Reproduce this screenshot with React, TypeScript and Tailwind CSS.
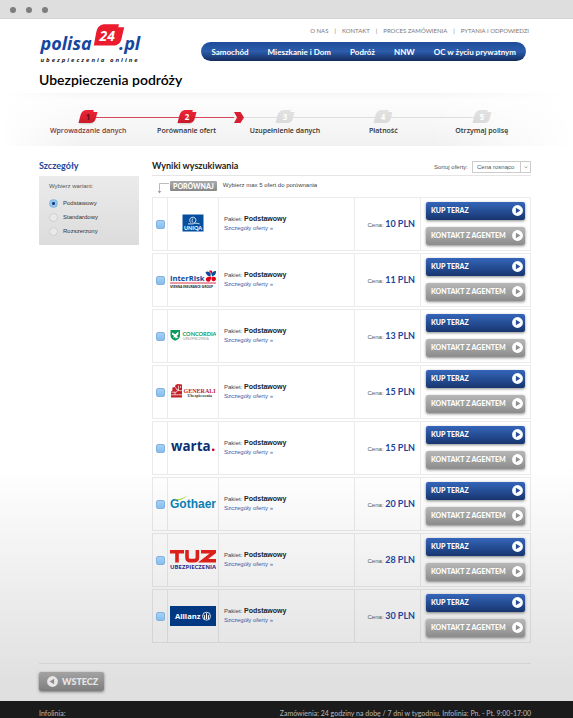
import { useState, type ReactNode } from 'react';
import { clsx } from 'clsx';

interface Offer {
  id: string;
  name: string;
  price: number;
  logo: ReactNode;
}

const TOP_LINKS = ['O NAS', 'KONTAKT', 'PROCES ZAMÓWIENIA', 'PYTANIA I ODPOWIEDZI'];
const NAV_LINKS = ['Samochód', 'Mieszkanie i Dom', 'Podróż', 'NNW', 'OC w życiu prywatnym'];
const STEPS = ['Wprowadzanie danych', 'Porównanie ofert', 'Uzupełnienie danych', 'Płatność', 'Otrzymaj polisę'];
const VARIANTS = ['Podstawowy', 'Standardowy', 'Rozszerzony'];
const CURRENT_STEP = 2;

function UniqaLogo() {
  return (
    <svg width="46" height="20" viewBox="0 0 46 20" aria-hidden="true">
      <rect x="12.5" y="0.5" width="21" height="17" fill="#064f9e" />
      <g fill="none" stroke="#fff" strokeWidth="0.8">
        <path d="M20.9 8.700c-1.800-1.600-1.600-4.600 1-5.400 2.400-.6 4.400 1.200 4 3.400-.2 1.200-1 2-2 2.400" />
        <path d="M23.1 8.700c-1.200-1-1.400-2.600-.2-4.200" />
        <path d="M18 9.900h4c2.400 0 2.400-.8 4-.8s2 .8 3.600.8" />
      </g>
      <text x="23" y="15.8" textAnchor="middle" fill="#fff" fontSize="5.5" fontWeight="700" fontFamily="Lato, sans-serif">UNIQA</text>
    </svg>
  );
}

function InterRiskLogo() {
  return (
    <svg width="46" height="20" viewBox="0 0 46 20" aria-hidden="true">
      <text x="0" y="11" fill="#0d4a9b" fontSize="7.6" fontWeight="700" fontFamily="Open Sans, sans-serif">InterRisk</text>
      <path d="M35.500 2c2-1 4-.6 5.400 2L40.400 6.200c-2.200.2-4.200-1.200-4.900-4.200z" fill="#0d4a9b" />
      <path d="M46 1c.2 2.400-.6 4.600-3.600 5.200L41.400 5c0-2.600 2-4 4.600-4z" fill="#0d4a9b" />
      <path d="M35.800 9.800c-.2-2 1.400-3.400 4.800-3.400l.6.8c-.2 2.200-.8 3.800-2 4.400-1.600.4-3-.4-3.400-1.800z" fill="#e2001a" />
      <path d="M41.800 7c2.200-.8 4.200-.2 4.200 1.800 0 2-1.800 2.800-3.400 2.200-1.200-.6-1.400-2.200-.8-4z" fill="#e2001a" />
      <path d="M39 1c1-.8 3.200-.6 3.200.8 0 1-.6 2-1 2.600-.4-1.200-1-2.400-2.200-3.400z" fill="#e2001a" />
      <rect x="0" y="12.500" width="46" height="1" fill="#e2304a" />
      <text x="0" y="18" fill="#222" fontSize="4" fontWeight="700" fontFamily="Open Sans, sans-serif">
        V<tspan fontSize="3">IENNA </tspan>I<tspan fontSize="3">NSURANCE </tspan>G<tspan fontSize="3">ROUP</tspan>
      </text>
    </svg>
  );
}

function ConcordiaLogo() {
  return (
    <svg width="46" height="20" viewBox="0 0 46 20" aria-hidden="true">
      <path d="M.5 4h9.500v5.500c0 2.600-2 4.200-4.800 5.200C2.400 13.700.5 12.100.5 9.500z" fill="#0a9a5c" />
      <path d="M2 6.500l3.200 1.800L8.400 5.500v3L6.600 10.100 8.400 11.500 5.600 12.500 5 10.900 3.200 11.900 4 9.700 2 8.500z" fill="#fff" />
      <text x="12.5" y="9.5" fill="#0a9a5c" fontSize="5.6" fontWeight="700" fontFamily="Lato, sans-serif">CONCORDIA</text>
      <text x="13" y="13.5" fill="#9a9a9a" fontSize="3.4" fontFamily="Lato, sans-serif">UBEZPIECZENIA</text>
    </svg>
  );
}

function GeneraliLogo() {
  return (
    <svg width="46" height="20" viewBox="0 0 46 20" aria-hidden="true">
      <path d="M1 15.500v-6l1.400-1V5.600L5 5l.6-2.200L8 2l4 .6v12.900z" fill="#c3202a" />
      <g stroke="#fff" strokeWidth="0.7" fill="none">
        <path d="M5.400 5.200 7 8l2-.4M8.400 3.600v5M1.400 10.200h5l1-1.600h4.400M1 12.800h11M5 10.200v2.600M10.400 4v2" />
      </g>
      <text x="13.6" y="10.500" fill="#c3202a" fontSize="6" fontWeight="700" fontFamily="Liberation Serif, serif">GENERALI</text>
      <text x="17.5" y="15.2" fill="#333" fontSize="4" fontWeight="700" fontFamily="Liberation Serif, serif">Ubezpieczenia</text>
    </svg>
  );
}

function WartaLogo() {
  return (
    <svg width="46" height="20" viewBox="0 0 46 20" aria-hidden="true">
      <text x="1" y="13" fill="#0a2f74" fontSize="13.4" fontWeight="700" fontFamily="Open Sans, sans-serif">warta</text>
      <circle cx="43.2" cy="11.8" r="1.400" fill="#d5004b" />
    </svg>
  );
}

function GothaerLogo() {
  return (
    <svg width="46" height="20" viewBox="0 0 46 20" aria-hidden="true">
      <text x="0" y="14" fill="#0a7fb4" fontSize="12" fontWeight="700" fontFamily="Liberation Sans, sans-serif">Gothaer</text>
      <path d="M4 4.400c4 1.800 8 .2 13.500-3.200C14.400 4.400 8.600 8.400 4 4.400z" fill="#a5d42a" />
    </svg>
  );
}

function TuzLogo() {
  return (
    <svg width="46" height="20" viewBox="0 0 46 20" aria-hidden="true">
      <g fill="none" stroke="#dd1f1c" strokeWidth="3.6">
        <path d="M0 1.800h14M7 1v11.500" />
        <path d="M17 0v7.400c0 2.200 1 3.200 3.400 3.200h3.600c2.400 0 3.400-1 3.400-3.200V0" />
        <path d="M31 1.800h13.600l-11.400 8.900H46" />
      </g>
      <text x="0" y="19" fill="#2b2f8f" fontSize="6" fontWeight="700" fontFamily="Open Sans, sans-serif">UBEZPIECZENIA</text>
    </svg>
  );
}

function AllianzLogo() {
  return (
    <svg width="46" height="20" viewBox="0 0 46 20" aria-hidden="true">
      <rect width="46" height="20" fill="#003882" />
      <text x="5" y="12.8" fill="#fff" fontSize="7.6" fontWeight="700" fontFamily="Open Sans, sans-serif">Allianz</text>
      <g fill="none" stroke="#fff">
        <circle cx="36.5" cy="10.2" r="4" strokeWidth="0.8" />
        <path d="M36.500 7.200v6M34.600 13V9.400h-.8M38.400 13V9.400h.8" strokeWidth="1" />
      </g>
    </svg>
  );
}

const OFFERS: Offer[] = [
  { id: 'uniqa', name: 'UNIQA', price: 10, logo: <UniqaLogo /> },
  { id: 'interrisk', name: 'InterRisk', price: 11, logo: <InterRiskLogo /> },
  { id: 'concordia', name: 'Concordia', price: 13, logo: <ConcordiaLogo /> },
  { id: 'generali', name: 'Generali', price: 15, logo: <GeneraliLogo /> },
  { id: 'warta', name: 'Warta', price: 15, logo: <WartaLogo /> },
  { id: 'gothaer', name: 'Gothaer', price: 20, logo: <GothaerLogo /> },
  { id: 'tuz', name: 'TUZ', price: 28, logo: <TuzLogo /> },
  { id: 'allianz', name: 'Allianz', price: 30, logo: <AllianzLogo /> },
];

function BrandLogo() {
  return (
    <svg width="104" height="42" viewBox="0 0 104 42" role="img" aria-label="polisa24.pl">
      <g fontFamily="Open Sans, sans-serif" fontStyle="italic" fontWeight="700">
        <text x="1.5" y="26.5" fontSize="18" fill="#15479e">polisa</text>
        <text x="80" y="26.5" fontSize="18" fill="#15479e">.pl</text>
        <path d="M54.800 22.600 57.200 9.600c1.200-6 4-8.400 9.300-8.400h13.400l-.6 3h5.900l-2.500 10.800c-1.200 5.200-3.700 7.600-8.900 7.600z" fill="#ea1c2d" />
        <text x="60.5" y="17.5" fontSize="14" fill="#fff">24</text>
      </g>
      <text x="1.5" y="38.5" fontSize="6" fontStyle="italic" fontWeight="700" fill="#222" fontFamily="Open Sans, sans-serif" className="tracking-[2px]">
        ubezpieczenia online
      </text>
    </svg>
  );
}

function StepBadge({ n }: { n: number }) {
  const active = n <= CURRENT_STEP;
  return (
    <svg width="20" height="16" viewBox="0 0 20 16" className="relative" aria-hidden="true">
      <defs>
        <linearGradient id={`step${n}`} x1="0" y1="0" x2="0" y2="1">
          <stop offset="0" stopColor={active ? '#ee2436' : '#e2e2e2'} />
          <stop offset="1" stopColor={active ? '#c81a2a' : '#dadada'} />
        </linearGradient>
      </defs>
      {active && <ellipse cx="8" cy="14.5" rx="7" ry="1" fill="#000" opacity="0.12" />}
      <path d="M.5 14 2.400 6.600C3.600 2.400 5.600 1 9.400 1h6.400l-.4 2h4.100l-1.600 6c-1 3.800-2.800 5-6.200 5z" fill={`url(#step${n})`} />
      <text x="10" y="11" textAnchor="middle" fontSize="8" fontWeight="700" fontFamily="Open Sans, sans-serif" fill={n === 1 ? '#5a1018' : '#fff'}>
        {n}
      </text>
    </svg>
  );
}

function PlayCircle({ fill, flip }: { fill: string; flip?: boolean }) {
  return (
    <svg width="11" height="11" viewBox="0 0 11 11" className={clsx('shrink-0', flip && 'rotate-180')} aria-hidden="true">
      <circle cx="5.5" cy="5.5" r="5.4" fill={flip ? '#e6e6e6' : '#fff'} />
      <path d="M3.900 2.700v5.600L8.400 5.500z" fill={fill} />
    </svg>
  );
}

function Stepper() {
  return (
    <section className="relative mt-1 h-[53px] bg-linear-to-b from-white to-[#f1f1f1]">
      {/* top edge shade */}
      <div className="h-2 bg-linear-to-b from-[#f5f5f5] to-transparent" />
      {/* fade on both sides */}
      <div className="absolute inset-0 bg-linear-to-r from-white via-transparent via-15% to-transparent" />
      <div className="absolute inset-0 bg-linear-to-l from-white via-transparent via-25% to-transparent" />
      <ol className="relative mr-[42px] ml-[39px] grid grid-cols-5 pt-2">
        {STEPS.map((label, i) => (
          <li key={label} className="relative flex flex-col items-center">
            {i < STEPS.length - 1 && (
              <span className={clsx('absolute top-2 left-1/2 h-px w-full', i === 0 ? 'bg-[#d9485a]' : 'bg-[#dedede]')} />
            )}
            {i === CURRENT_STEP - 1 && (
              <span className="absolute top-[3px] left-1/2 flex h-[11px] w-[57px] items-center">
                <span className="h-px grow bg-[#d9485a]" />
                <svg width="10" height="11" viewBox="0 0 10 11" aria-hidden="true">
                  <path d="M0 0h6.500L10 5.500 6.500 11H0l3-5.500z" fill="#d81f31" />
                </svg>
              </span>
            )}
            <StepBadge n={i + 1} />
            <span
              className={clsx(
                "mt-px font-['Open_Sans',sans-serif] text-[7px] leading-[10px] font-semibold whitespace-nowrap",
                i === 0 ? 'text-[#7d3a42]' : 'text-[#333]',
              )}
            >
              {label}
            </span>
          </li>
        ))}
      </ol>
    </section>
  );
}

function OfferRow({ offer }: { offer: Offer }) {
  const cell = 'h-[54px] border-y border-l border-black/8';
  return (
    <tr>
      <td className={clsx(cell, 'w-[15px] p-0')}>
        <input
          type="checkbox"
          aria-label={`Porównaj ${offer.name}`}
          className="mx-auto block size-[9px] appearance-none rounded-[2px] border border-[#83b3dc] bg-linear-to-b from-[#a3d0f5] to-[#86bfee] checked:bg-[#2f6fb5]"
        />
      </td>
      <td className={clsx(cell, 'w-[51px] py-0 pr-0 pl-0.5')}>{offer.logo}</td>
      <td className={clsx(cell, 'py-0 pr-0 pl-[5px]')}>
        <div className="text-[6px] leading-[9px] text-[#444]">
          Pakiet: <strong className="text-[7px] text-[#222]">Podstawowy</strong>
        </div>
        <a href="#" className="block pb-0.5 text-[6px] leading-[9px] text-[#4059a8]">Szczegóły oferty »</a>
      </td>
      <td className={clsx(cell, 'w-[66px] py-0 pr-[5px] pl-0 text-right text-[6px] text-[#555]')}>
        Cena: <span className="font-['Lato',sans-serif] text-[9px] font-bold text-[#1d459b]">{offer.price} PLN</span>
      </td>
      <td className={clsx(cell, 'w-[111px] border-r px-[5px] pt-0 pb-0.5')}>
        <div className="flex flex-col gap-[7px] font-['Lato',sans-serif] text-[7px] font-black text-white">
          <button className="flex h-[18px] items-center justify-between rounded-[2px] bg-linear-to-b from-[#3566bb] to-[#17366f] pr-0.5 pl-[5px] shadow-[0_1px_3px_#0007]">
            KUP TERAZ
            <PlayCircle fill="#24509a" />
          </button>
          <button className="flex h-[18px] items-center justify-between rounded-[2px] bg-linear-to-b from-[#b7b7b7] to-[#8c8c8c] pr-0.5 pl-[5px] whitespace-nowrap shadow-[0_1px_3px_#0007]">
            KONTAKT Z AGENTEM
            <PlayCircle fill="#8f8f8f" />
          </button>
        </div>
      </td>
    </tr>
  );
}

export default function App() {
  const [variant, setVariant] = useState(VARIANTS[0]);
  const [sort, setSort] = useState('asc');

  const offers = sort === 'asc' ? OFFERS : [...OFFERS].reverse();

  return (
    <div className="flex min-h-screen flex-col bg-linear-to-b from-white from-65% to-[#e0e0e0] to-95% font-['Liberation_Sans',sans-serif]">
      {/* Window bar */}
      <div className="flex h-[19px] shrink-0 items-center gap-2.5 border-b border-[#d2d2d2] bg-[#dedede] pt-0.5 pl-[10px]">
        {[0, 1, 2].map(i => (
          <span key={i} className="size-1.5 rounded-full bg-[#7d7d7d]" />
        ))}
      </div>

      <header className="mr-[42px] ml-[39px] font-['Lato',sans-serif]">
        <div className="flex items-start justify-between pt-1">
          <a href="#"><BrandLogo /></a>
          <div className="flex flex-col items-end pt-1">
            <ul className="flex pr-0.5 text-[6px] leading-2 text-[#777]">
              {TOP_LINKS.map((link, i) => (
                <li key={link} className="flex">
                  {i > 0 && <span className="px-1.5">|</span>}
                  <a href="#">{link}</a>
                </li>
              ))}
            </ul>
            <nav className="mt-[7px] mr-[5px] flex h-[19px] items-center gap-[19px] rounded-full bg-linear-to-b from-[#1f4d9c] via-[#2c5cab] via-50% to-[#132c5e] px-2.5 text-[8px] font-bold text-white">
              {NAV_LINKS.map(link => (
                <a key={link} href="#">{link}</a>
              ))}
            </nav>
          </div>
        </div>
        <h1 className="mt-1.5 text-[14px] leading-[18px] font-semibold text-black">Ubezpieczenia podróży</h1>
      </header>

      <Stepper />

      <main className="mt-3 mr-[42px] ml-[39px] flex gap-[13px]">
        <aside className="w-[100px] shrink-0">
          <h2 className="font-['Lato',sans-serif] text-[9px] leading-4 font-bold text-[#1d459b]">Szczegóły</h2>
          <fieldset className="mt-0.5 h-[69px] rounded-[1px] bg-linear-to-b from-[#ebebeb] to-[#dcdcdc] px-2.5 pt-1.5 text-[6px] text-[#333]">
            <legend className="float-left mb-1.5 w-full leading-2 text-[#555]">Wybierz wariant:</legend>
            {VARIANTS.map(v => (
              <label key={v} className="clear-both flex h-[14px] items-center gap-[5px]">
                <input
                  type="radio"
                  name="variant"
                  checked={variant === v}
                  onChange={() => setVariant(v)}
                  className="size-[9px] appearance-none rounded-full border border-[#cfcfcf] bg-[#e9e9e9] checked:border-[#86b4dd] checked:bg-[radial-gradient(circle,#123f73_0_1px,#93c6f0_2px)]"
                />
                {v}
              </label>
            ))}
          </fieldset>
        </aside>

        <section className="grow">
          <div className="flex h-[18px] items-start justify-between border-b border-black/10">
            <h2 className="font-['Lato',sans-serif] text-[9px] leading-4 font-bold text-[#222]">Wyniki wyszukiwania</h2>
            <div className="flex items-center gap-1 pt-[3px] text-[6px] text-[#555]">
              <label htmlFor="sort">Sortuj oferty:</label>
              <div className="relative">
                <select
                  id="sort"
                  value={sort}
                  onChange={e => setSort(e.target.value)}
                  className="block h-3 w-[59px] appearance-none border border-[#ccc] bg-white pl-1 text-[6px] leading-[10px]"
                >
                  <option value="asc">Cena rosnąco</option>
                  <option value="desc">Cena malejąco</option>
                </select>
                <span className="pointer-events-none absolute inset-y-0 right-0 flex w-[11px] items-center justify-center border-l border-[#ccc]">
                  <svg width="4" height="3" viewBox="0 0 4 3" aria-hidden="true">
                    <path d="M0.500 0.500 2 2 3.500 0.500" fill="none" stroke="#999" strokeWidth="0.8" />
                  </svg>
                </span>
              </div>
            </div>
          </div>

          <div className="flex items-center pt-1 pl-[5px]">
            <svg width="13" height="15" viewBox="0 0 13 15" className="-mb-1" aria-hidden="true">
              <path d="M12 3.500H2.500V12" fill="none" stroke="#aaa" strokeWidth="0.8" />
              <path d="M.8 11h3.400L2.500 13.500z" fill="#999" />
            </svg>
            <button className="h-2.5 rounded-[1px] bg-linear-to-b from-[#aaa] to-[#888] px-[3px] font-['Lato',sans-serif] text-[7px] leading-[10px] font-black text-white">
              PORÓWNAJ
            </button>
            <span className="pl-1.5 text-[6px] text-[#444]">Wybierz max 5 ofert do porównania</span>
          </div>

          <table className="mt-1 w-full border-separate border-spacing-x-0 border-spacing-y-0.5">
            <tbody>
              {offers.map(offer => (
                <OfferRow key={offer.id} offer={offer} />
              ))}
            </tbody>
          </table>
        </section>
      </main>

      <div className="mt-[18px] mr-[42px] ml-[39px] border-t border-[#d4d4d4] pt-2 pb-2.5">
        <button className="flex h-[19px] w-[65px] items-center gap-1 rounded-[2px] bg-linear-to-b from-[#a3a3a3] to-[#7e7e7e] pl-2 font-['Lato',sans-serif] text-[9px] font-black text-[#e6e6e6] shadow-[0_1px_3px_#0007]">
          <PlayCircle fill="#8c8c8c" flip />
          WSTECZ
        </button>
      </div>

      <footer className="mt-auto flex justify-between bg-[#1b1b1b] pt-[7px] pr-[42px] pl-[39px] font-['Lato',sans-serif] text-[7px] leading-[10px] font-medium text-[#b0b0b0]">
        <span>Infolinia:</span>
        <span>Zamówienia: 24 godziny na dobę / 7 dni w tygodniu. Infolinia: Pn. - Pt. 9:00-17:00</span>
      </footer>
    </div>
  );
}
